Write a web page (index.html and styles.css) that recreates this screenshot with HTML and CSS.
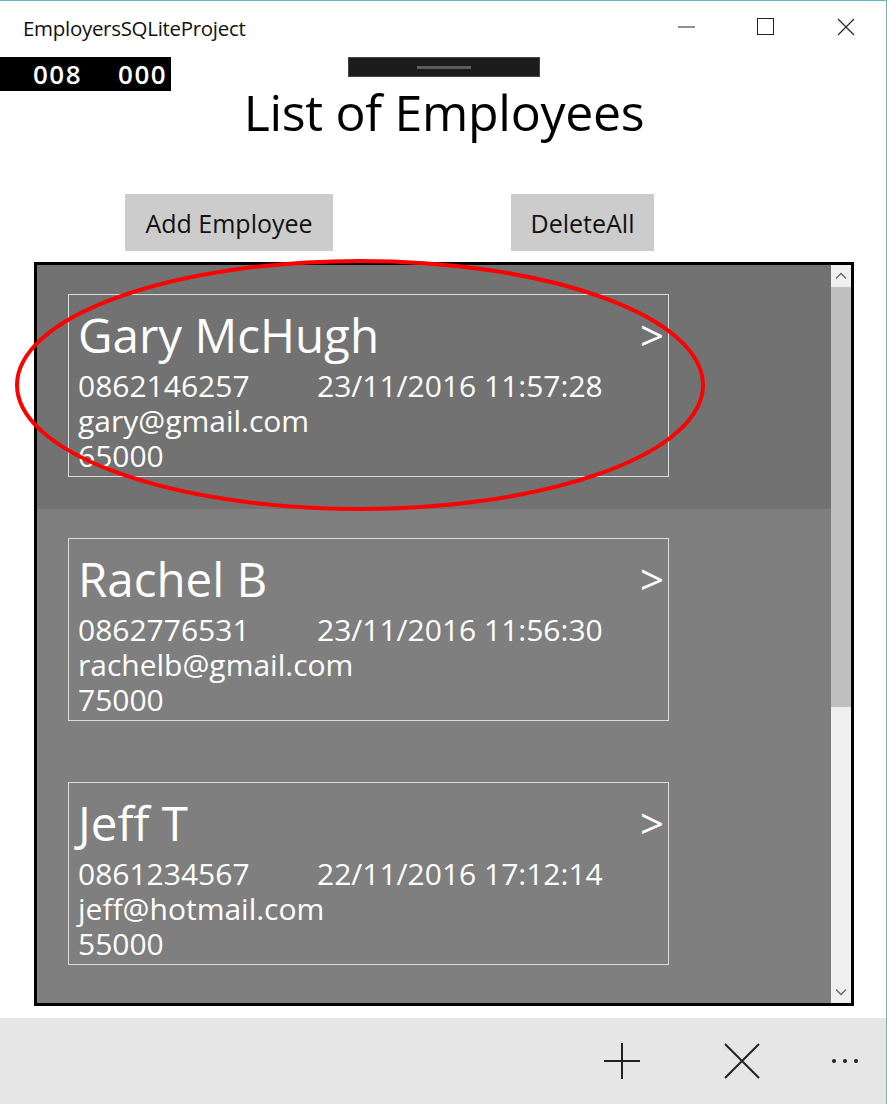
FILE: index.html
```html
<!DOCTYPE html>
<html>
<head>
<meta charset="utf-8">
<link rel="stylesheet" href="styles.css">
</head>
<body>
<div class="window">
  <header class="titlebar">
    <span class="app-title">EmployersSQLiteProject</span>
    <div class="caption">
      <span class="cap-btn"><svg width="18" height="18" viewBox="0 0 18 18"><line x1="1" y1="9" x2="18" y2="9" stroke="#222" stroke-width="1"/></svg></span>
      <span class="cap-btn"><svg width="18" height="18" viewBox="0 0 18 18"><rect x="0.5" y="0.5" width="16" height="16" fill="none" stroke="#222" stroke-width="1"/></svg></span>
      <span class="cap-btn"><svg width="18" height="18" viewBox="0 0 18 18"><path d="M1 1 L17 17 M17 1 L1 17" stroke="#222" stroke-width="1.1"/></svg></span>
    </div>
  </header>

  <div class="counter"><span>008</span><span>000</span></div>
  <div class="dragbar"><span class="grip"></span></div>

  <main class="content">
    <h1 class="page-title">List of Employees</h1>
    <div class="actions">
      <button class="btn btn-add">Add Employee</button>
      <button class="btn btn-del">DeleteAll</button>
    </div>
    <div class="listbox">
      <div class="items">
        <div class="item selected">
          <div class="card">
            <div class="name-row"><span class="name">Gary McHugh</span><span class="chev">&gt;</span></div>
            <div class="line"><span class="phone">0862146257</span><span>23/11/2016 11:57:28</span></div>
            <div class="line">gary@gmail.com</div>
            <div class="line">65000</div>
          </div>
        </div>
        <div class="item">
          <div class="card">
            <div class="name-row"><span class="name">Rachel B</span><span class="chev">&gt;</span></div>
            <div class="line"><span class="phone">0862776531</span><span>23/11/2016 11:56:30</span></div>
            <div class="line">rachelb@gmail.com</div>
            <div class="line">75000</div>
          </div>
        </div>
        <div class="item">
          <div class="card">
            <div class="name-row"><span class="name">Jeff T</span><span class="chev">&gt;</span></div>
            <div class="line"><span class="phone">0861234567</span><span>22/11/2016 17:12:14</span></div>
            <div class="line">jeff@hotmail.com</div>
            <div class="line">55000</div>
          </div>
        </div>
      </div>
      <div class="scrollbar">
        <div class="sb-arrow"><svg width="12" height="8" viewBox="0 0 12 8"><path d="M1 6.5 L6 1.5 L11 6.5" fill="none" stroke="#666" stroke-width="1.3"/></svg></div>
        <div class="sb-thumb"></div>
        <div class="sb-track"></div>
        <div class="sb-arrow"><svg width="12" height="8" viewBox="0 0 12 8"><path d="M1 1.5 L6 6.5 L11 1.5" fill="none" stroke="#666" stroke-width="1.3"/></svg></div>
      </div>
    </div>
  </main>

  <footer class="appbar">
    <span class="ab-btn"><svg width="38" height="38" viewBox="0 0 38 38"><path d="M19 1 V37 M1 19 H37" stroke="#222" stroke-width="2"/></svg></span>
    <span class="ab-btn"><svg width="36" height="36" viewBox="0 0 36 36"><path d="M1 1 L35 35 M35 1 L1 35" stroke="#222" stroke-width="2"/></svg></span>
    <span class="ab-more"><i></i><i></i><i></i></span>
  </footer>

  <svg class="annotation" width="700" height="260" viewBox="0 0 700 260"><ellipse cx="345" cy="127" rx="343" ry="124" fill="none" stroke="#ff0000" stroke-width="4"/></svg>
</div>
</body>
</html>
```

FILE: styles.css
```css
* { box-sizing: border-box; }
html, body { margin: 0; padding: 0; }
body {
  width: 887px;
  height: 1104px;
  overflow: hidden;
  background: #ffffff;
  font-family: "Open Sans", "Noto Sans", sans-serif;
}
.window {
  position: relative;
  width: 887px;
  height: 1104px;
  border-top: 1px solid #5fb7c7;
  border-right: 1px solid #5fb7c7;
  display: flex;
  flex-direction: column;
}
.titlebar {
  height: 56px;
  display: flex;
  align-items: center;
  justify-content: space-between;
  padding-left: 23px;
  flex: none;
}
.app-title {
  font-size: 20.5px;
  color: #111;
  margin-top: -2px;
  letter-spacing: -0.3px;
}
.caption { display: flex; height: 100%; }
.cap-btn {
  width: 80px;
  display: flex;
  align-items: center;
  justify-content: center;
  margin-top: -4px;
}
.counter {
  position: absolute;
  left: 0;
  top: 56px;
  width: 171px;
  height: 34px;
  background: #000;
  color: #fff;
  font-size: 26px;
  font-weight: 600;
  letter-spacing: 1.5px;
  display: flex;
  gap: 36px;
  padding-left: 33px;
  align-items: center;
  line-height: 1;
}
.dragbar {
  position: absolute;
  left: 348px;
  top: 56px;
  width: 192px;
  height: 20px;
  background: #1c1c1c;
  border: 1px solid #444;
  display: flex;
  align-items: center;
  justify-content: center;
}
.grip {
  width: 54px;
  height: 3px;
  background: #5a5a5a;
}
.content {
  flex: 1;
  display: flex;
  flex-direction: column;
}
.page-title {
  margin: 24px 0 0 0;
  text-align: center;
  font-weight: 400;
  font-size: 50px;
  line-height: 62px;
  color: #000;
  padding-left: 2px;
  letter-spacing: -0.3px;
}
.actions {
  display: flex;
  gap: 178px;
  padding-left: 125px;
  margin-top: 51px;
}
.btn {
  height: 57px;
  border: none;
  background: #cccccc;
  font-family: inherit;
  font-size: 25px;
  color: #111;
  padding: 0;
}
.btn-add { width: 208px; }
.btn-del { width: 143px; }
.listbox {
  margin: 11px 0 0 34px;
  width: 820px;
  height: 744px;
  border: 3px solid #000;
  display: flex;
  background: #7f7f7f;
}
.items {
  flex: 1;
  overflow: hidden;
}
.item {
  height: 244px;
  padding: 29px 0 0 31px;
  background: #7f7f7f;
}
.item.selected { background: #727272; }
.card {
  width: 601px;
  height: 183px;
  border: 1px solid #dcdcdc;
  color: #fff;
  padding: 0 0 0 9px;
  font-size: 30px;
  line-height: 35px;
}
.name-row {
  display: flex;
  justify-content: space-between;
  align-items: center;
  height: 73px;
}
.name { font-size: 47.5px; line-height: 56px; margin-top: 6px; }
.chev {
  font-size: 42px;
  line-height: 50px;
  margin-right: 4px;
  margin-top: 6px;
}
.line { white-space: nowrap; height: 35px; }
.phone { display: inline-block; width: 239px; }
.scrollbar {
  width: 20px;
  display: flex;
  flex-direction: column;
  background: #f0f0f0;
}
.sb-arrow {
  height: 22px;
  display: flex;
  align-items: center;
  justify-content: center;
  background: #f0f0f0;
}
.sb-thumb { height: 420px; background: #c0c0c0; }
.sb-track { flex: 1; }
.appbar {
  height: 86px;
  background: #e6e6e6;
  margin-top: 11px;
  flex: none;
  display: flex;
  justify-content: flex-end;
  align-items: center;
  padding-right: 28px;
}
.ab-btn {
  width: 120px;
  display: flex;
  justify-content: center;
}
.ab-more {
  width: 26px;
  display: flex;
  gap: 7px;
  margin-left: 30px;
}
.ab-more i {
  width: 4px;
  height: 4px;
  background: #222;
  border-radius: 50%;
}
.annotation {
  position: absolute;
  left: 15px;
  top: 257px;
  pointer-events: none;
}
```
